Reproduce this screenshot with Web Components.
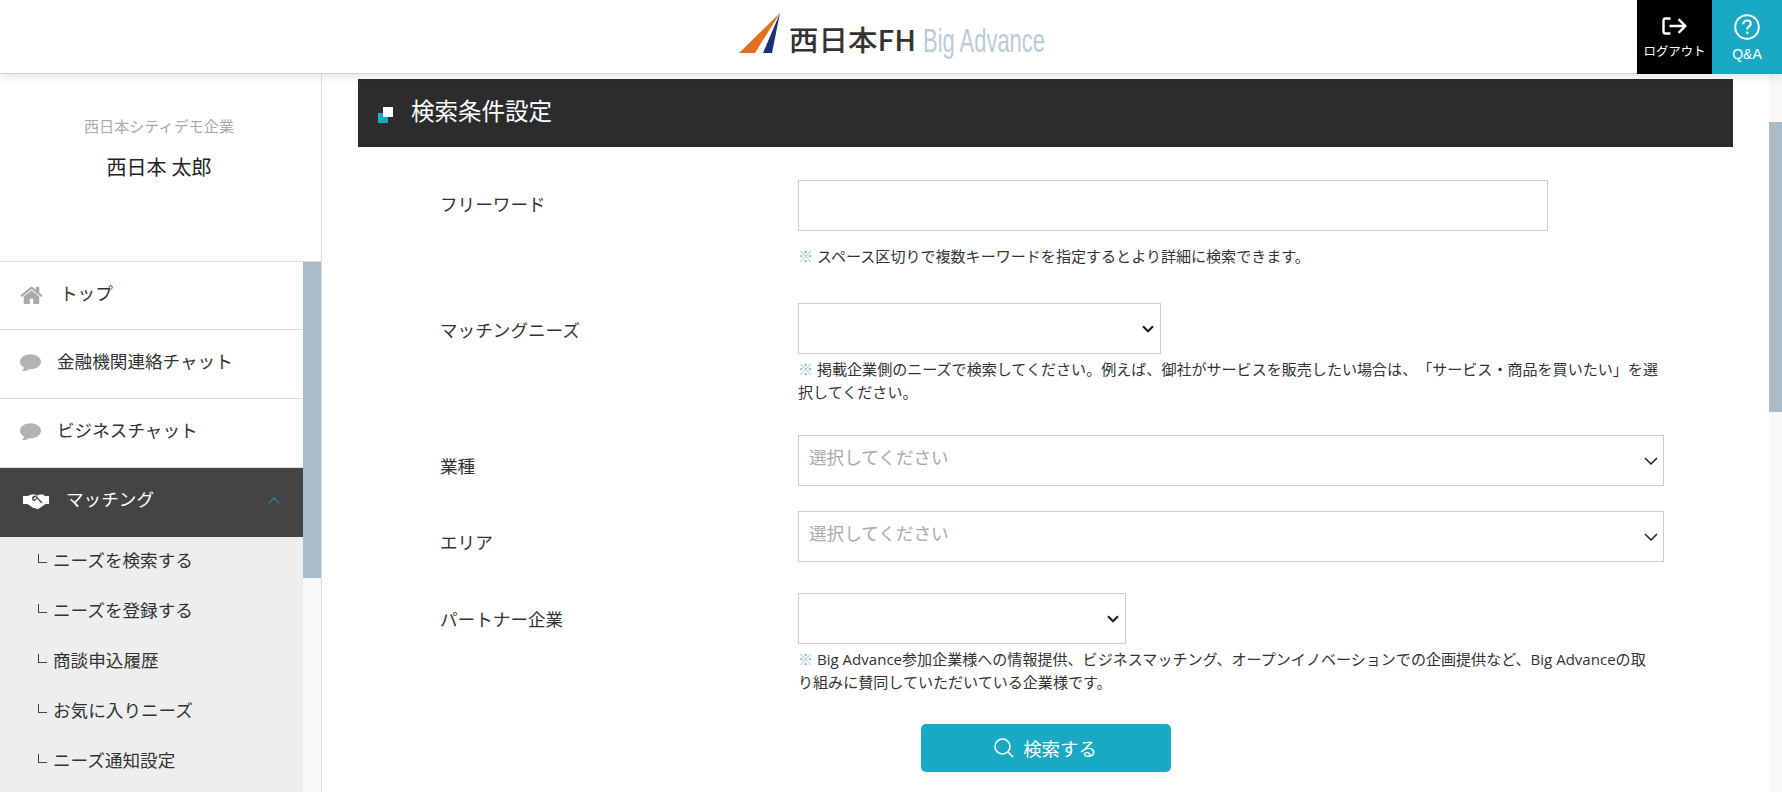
<!DOCTYPE html>
<html lang="ja">
<head>
<meta charset="utf-8">
<title>西日本FH Big Advance</title>
<style>
  html, body { margin: 0; height: 100%; overflow: hidden; background: #fff; }
  body {
    font-family: "Open Sans", "Noto Sans CJK JP", sans-serif;
    font-size: 17.6px;
    color: #333;
    display: flex;
    flex-direction: column;
    text-spacing-trim: space-all;
  }
  .body-row { flex: 1; display: flex; min-height: 0; }
</style>
</head>
<body>
<fh-header></fh-header>
<div class="body-row">
  <fh-sidebar company="西日本シティデモ企業" person="西日本 太郎">
    <fh-nav-item icon="home">トップ</fh-nav-item>
    <fh-nav-item icon="chat">金融機関連絡チャット</fh-nav-item>
    <fh-nav-item icon="chat">ビジネスチャット</fh-nav-item>
    <fh-nav-item icon="handshake" active>マッチング</fh-nav-item>
    <fh-sub-item>ニーズを検索する</fh-sub-item>
    <fh-sub-item>ニーズを登録する</fh-sub-item>
    <fh-sub-item>商談申込履歴</fh-sub-item>
    <fh-sub-item>お気に入りニーズ</fh-sub-item>
    <fh-sub-item>ニーズ通知設定</fh-sub-item>
  </fh-sidebar>
  <fh-search-page>
    <fh-title-bar>検索条件設定</fh-title-bar>
    <fh-form-row label="フリーワード" gap="35" note-gap="14" note="スペース区切りで複数キーワードを指定するとより詳細に検索できます。">
      <fh-field width="750"></fh-field>
    </fh-form-row>
    <fh-form-row label="マッチングニーズ" label-shift="3" gap="31" note-gap="4" note="掲載企業側のニーズで検索してください。例えば、御社がサービスを販売したい場合は、「サービス・商品を買いたい」を選|択してください。">
      <fh-field width="363" arrow="native"></fh-field>
    </fh-form-row>
    <fh-form-row label="業種" label-shift="7" gap="25">
      <fh-field arrow="thin" placeholder="選択してください"></fh-field>
    </fh-form-row>
    <fh-form-row label="エリア" label-shift="7" gap="31">
      <fh-field arrow="thin" placeholder="選択してください"></fh-field>
    </fh-form-row>
    <fh-form-row label="パートナー企業" label-shift="2" gap="30" note-gap="4" note="Big Advance参加企業様への情報提供、ビジネスマッチング、オープンイノベーションでの企画提供など、Big Advanceの取|り組みに賛同していただいている企業様です。">
      <fh-field width="328" arrow="native"></fh-field>
    </fh-form-row>
    <fh-search-button>検索する</fh-search-button>
  </fh-search-page>
</div>

<script>
const define = (name, markup) => {
    customElements.define(name, class extends HTMLElement {
        constructor() {
            super();
            this.attachShadow({ mode: 'open' });
        }
        connectedCallback() {
            this.shadowRoot.innerHTML = typeof markup === 'function' ? markup(this) : markup;
        }
    });
};

const icons = {
    home: '<svg width="23" height="19" viewBox="60 128 1672 1408" fill="#aaa"><path d="M1472 992v480q0 26-19 45t-45 19h-384v-384h-256v384h-384q-26 0-45-19t-19-45v-480q0-1 .5-3t.5-3l575-474 575 474q1 2 1 6zm223-69l-62 74q-8 9-21 11h-3q-13 0-21-7l-692-577-692 577q-12 8-24 7-13-2-21-11l-62-74q-8-10-7-23.500t11-21.500l719-599q32-26 76-26t76 26l244 204v-195q0-14 9-23t23-9h192q14 0 23 9t9 23v408l219 182q10 8 11 21.500t-7 23.500z"/></svg>',
    chat: '<svg width="21" height="17" viewBox="0 256 1792 1408" fill="#b3b3b3"><path d="M1792 896q0 174-120 321.500t-326 233-450 85.500q-70 0-145-8-198 175-460 242-49 14-114 22-17 2-30.500-9t-17.500-29v-1q-3-4-.5-12t2-10 4.500-9.500l6-9 7-8.500 8-9q7-8 31-34.500t34.500-38 31-39.500 32.500-51 27-59 26-76q-157-89-247.500-220t-90.500-281q0-130 71-248.500t191-204.500 286-136.500 348-50.500q244 0 450 85.500t326 233 120 321.500z"/></svg>',
    handshake: '<svg width="26" height="15" viewBox="0 0 26 15"><path fill="#fff" d="M0 2h4.500l4-1.500h3.500l2 1 3-1h3l2 1.500h4v8h-3.500l-6.500 4.500q-2 1-3 0l-1.500-.5q-2 .2-3-1.200l-4-2.800H0z"/><path fill="none" stroke="#444" stroke-width="1.200" d="M9 3.500l3.500-1.500 6.500 7M12 2l-2.500 3.500 2 1 2-2"/></svg>'
};

define('fh-header', `
<style>
  :host {
    display: flex;
    height: 74px;
    flex: none;
    position: relative;
    z-index: 2;
    box-sizing: border-box;
    background: #fff;
    border-bottom: 1px solid #d2d2d2;
    box-shadow: 0 3px 10px rgba(0, 0, 0, 0.1);
  }
  #logo { flex: 1; padding-left: 738px; }
  svg { display: block; }
  a {
    height: 74px;
    display: flex;
    flex-direction: column;
    align-items: center;
    color: #fff;
    font-family: "Liberation Sans", "Noto Sans CJK JP", sans-serif;
    font-size: 12.400px;
    box-sizing: border-box;
  }
  #out { width: 75px; background: #000; padding-top: 17px; }
  #qa { width: 70px; background: #1aa9c4; padding-top: 14px; font-size: 14px; }
  span { line-height: 16px; margin-top: 9px; }
  #qa span { margin-top: 6px; }
  text { font-family: "Noto Sans CJK JP", sans-serif; }
</style>
<div id="logo">
  <svg width="420" height="73" viewBox="0 0 420 73">
    <polygon points="1,53 42,13 17,53" fill="#e2701f"/>
    <polygon points="25,53 42,13 34,53" fill="#1d3177"/>
    <text x="51" y="51" font-size="28" font-weight="500" fill="#333" textLength="127" lengthAdjust="spacingAndGlyphs">西日本FH</text>
    <text x="185" y="52" font-size="34" fill="#b9ccd9" textLength="122" lengthAdjust="spacingAndGlyphs" style="font-family:'Liberation Sans',sans-serif">Big Advance</text>
  </svg>
</div>
<a id="out">
  <svg width="25" height="18" viewBox="0 0 25 18" fill="none" stroke="#fff" stroke-width="2.400">
    <path d="M8.500 1.500H3.500Q1.500 1.500 1.500 3.500V14.500Q1.500 16.500 3.500 16.500H8.500"/>
    <path d="M7.500 9H23M16.500 2.200 23.300 9l-6.800 6.800"/>
  </svg>
  <span>ログアウト</span>
</a>
<a id="qa">
  <svg width="26" height="26" viewBox="0 0 26 26" fill="none" stroke="#fff" stroke-width="2">
    <circle cx="13" cy="13" r="11.800"/>
    <path d="M9.300 10.300q0-3.800 3.900-3.800 3.600 0 3.600 3.200 0 1.800-2 2.900-1.500.9-1.500 2.800" stroke-width="2"/>
    <path d="M13.300 17.600v2.400" stroke-width="2.200"/>
  </svg>
  <span>Q&amp;A</span>
</a>
`);

define('fh-sidebar', (el) => `
<style>
  :host {
    display: flex;
    flex-direction: column;
    width: 322px;
    flex: none;
    box-sizing: border-box;
    border-right: 1px solid #ddd;
    overflow: hidden;
  }
  #profile {
    height: 188px;
    flex: none;
    box-sizing: border-box;
    border-bottom: 1px solid #ddd;
    text-align: center;
    padding: 41px 3px 0 0;
  }
  #company { font-size: 15.100px; line-height: 22px; color: #aaa; }
  #person { font-size: 20px; line-height: 28px; color: #222; margin-top: 17px; }
  #nav { flex: 1; display: flex; min-height: 0; }
  #list { flex: 1; min-width: 0; display: flex; flex-direction: column; }
  #rest { flex: 1; background: #eee; }
  fh-scrollbar { width: 18px; --thumb-h: 316px; --thumb-top: 0px; }
</style>
<div id="profile">
  <div id="company">${el.getAttribute('company')}</div>
  <div id="person">${el.getAttribute('person')}</div>
</div>
<div id="nav">
  <div id="list"><slot></slot><div id="rest"></div></div>
  <fh-scrollbar></fh-scrollbar>
</div>
`);

define('fh-scrollbar', `
<style>
  :host { display: block; flex: none; background: #f8f8f8; padding-top: var(--thumb-top); box-sizing: border-box; }
  div { height: var(--thumb-h); background: #aabcc9; }
</style>
<div></div>
`);

define('fh-nav-item', (el) => `
<style>
  :host {
    display: flex;
    align-items: center;
    height: 69px;
    flex: none;
    box-sizing: border-box;
    border-bottom: 1px solid #ddd;
    padding-left: 20px;
    padding-bottom: 7px;
    color: #333;
    line-height: 24px;
  }
  :host([icon="home"]) { height: 68px; padding-bottom: 5px; }
  #ic { display: flex; margin-right: 16px; padding-top: 4px; }
  :host([icon="home"]) #ic { margin-right: 17px; padding-top: 2px; }
  :host([active]) {
    background: #444;
    color: #fff;
    border-bottom: 0;
    padding-left: 23px;
  }
  :host([active]) #ic { margin-right: 17px; }
  #up { margin-left: auto; margin-right: 23px; display: flex; padding-top: 2px; }
</style>
<span id="ic">${icons[el.getAttribute('icon')]}</span>
<slot></slot>
${el.hasAttribute('active') ? '<span id="up"><svg width="12" height="7" viewBox="0 0 12 7" fill="none" stroke="#2a8ca3" stroke-width="1.200"><path d="M.7 6.300 6 1l5.300 5.300"/></svg></span>' : ''}
`);

define('fh-sub-item', `
<style>
  :host {
    display: flex;
    align-items: center;
    height: 50px;
    flex: none;
    padding-left: 38px;
    padding-bottom: 5px;
    box-sizing: border-box;
    background: #eee;
    color: #333;
    line-height: 24px;
  }
  i { width: 8px; height: 8px; border-left: 1px solid #444; border-bottom: 1px solid #444; margin: -3px 6px 0 0; }
</style>
<i></i><slot></slot>
`);

define('fh-search-page', `
<style>
  :host {
    display: block;
    flex: 1;
    min-width: 0;
    background: #fff;
    overflow: hidden;
  }
  #wrap { display: flex; height: 100%; }
  #content { flex: 1; min-width: 0; padding: 5px 36px 0; }
  fh-scrollbar { width: 13px; --thumb-top: 48px; --thumb-h: 290px; }
</style>
<div id="wrap">
  <div id="content"><slot></slot></div>
  <fh-scrollbar></fh-scrollbar>
</div>
`);

define('fh-title-bar', `
<style>
  :host {
    display: flex;
    align-items: center;
    height: 68px;
    background: #2c2c2c;
    color: #fff;
    font-size: 23.500px;
    padding-left: 20px;
    padding-bottom: 7px;
    box-sizing: border-box;
    margin-bottom: 33px;
  }
  #mark { position: relative; width: 15px; height: 16px; margin-right: 18px; margin-top: 11px; }
  i { position: absolute; width: 10px; height: 10px; }
  .a { left: 0; bottom: 0; background: #1aa9c4; }
  .b { right: 0; top: 0; background: #fff; }
</style>
<span id="mark"><i class="a"></i><i class="b"></i></span><slot></slot>
`);

define('fh-form-row', (el) => {
    const lines = (el.getAttribute('note') || '').split('|');
    return `
<style>
  :host {
    display: grid;
    grid-template-columns: 358px 1fr;
    margin: 0 69px ${el.getAttribute('gap')}px 82px;
  }
  #label { line-height: 24px; padding-top: calc(12px + ${el.getAttribute('label-shift') || 0}px); color: #333; }
  #note {
    font-size: 15.050px;
    line-height: 23px;
    color: #333;
    margin-top: ${el.getAttribute('note-gap') || 0}px;
  }
  #note div { white-space: nowrap; }
  b { font-weight: 400; color: #7fbfcc; }
</style>
<div id="label">${el.getAttribute('label')}</div>
<div>
  <slot></slot>
  ${el.hasAttribute('note') ? `<div id="note"><div><b>※</b> ${lines[0]}</div>${lines[1] ? `<div>${lines[1]}</div>` : ''}</div>` : ''}
</div>
`;
});

define('fh-field', (el) => {
    const arrow = el.getAttribute('arrow');
    const width = el.getAttribute('width');
    let svg = '';
    if (arrow === 'native') svg = '<svg width="12" height="8" viewBox="0 0 12 8" fill="none" stroke="#222" stroke-width="2.200"><path d="M1 1.200 6 6.200l5-5"/></svg>';
    if (arrow === 'thin') svg = '<svg width="14" height="8" viewBox="0 0 14 8" fill="none" stroke="#222" stroke-width="1.500"><path d="M1 1l6 6 6-6"/></svg>';
    return `
<style>
  :host {
    display: flex;
    align-items: center;
    justify-content: space-between;
    box-sizing: border-box;
    ${width ? `width: ${width}px;` : ''}
    height: 51px;
    border: 1px solid #ccc;
    background: #fff;
    padding: 0 ${arrow === 'native' ? 6 : 5}px 0 10px;
    color: #aaa;
    line-height: 24px;
  }
  span { padding-bottom: 7px; }
  svg { flex: none; }
</style>
<span>${el.getAttribute('placeholder') || ''}</span>${svg}`;
});

define('fh-search-button', `
<style>
  :host { display: flex; justify-content: center; }
  button {
    all: unset;
    width: 250px;
    height: 48px;
    background: #1aa9c4;
    border-radius: 5px;
    color: #fff;
    font-size: 18.400px;
    display: flex;
    align-items: center;
    justify-content: center;
    gap: 9px;
  }
  svg { flex: none; }
</style>
<button>
  <svg width="20" height="20" viewBox="0 0 20 20" fill="none" stroke="#fff" stroke-width="1.600"><circle cx="8.500" cy="8.500" r="7.500"/><path d="M14 14l5 5"/></svg>
  <slot></slot>
</button>
`);
</script>
</body>
</html>
